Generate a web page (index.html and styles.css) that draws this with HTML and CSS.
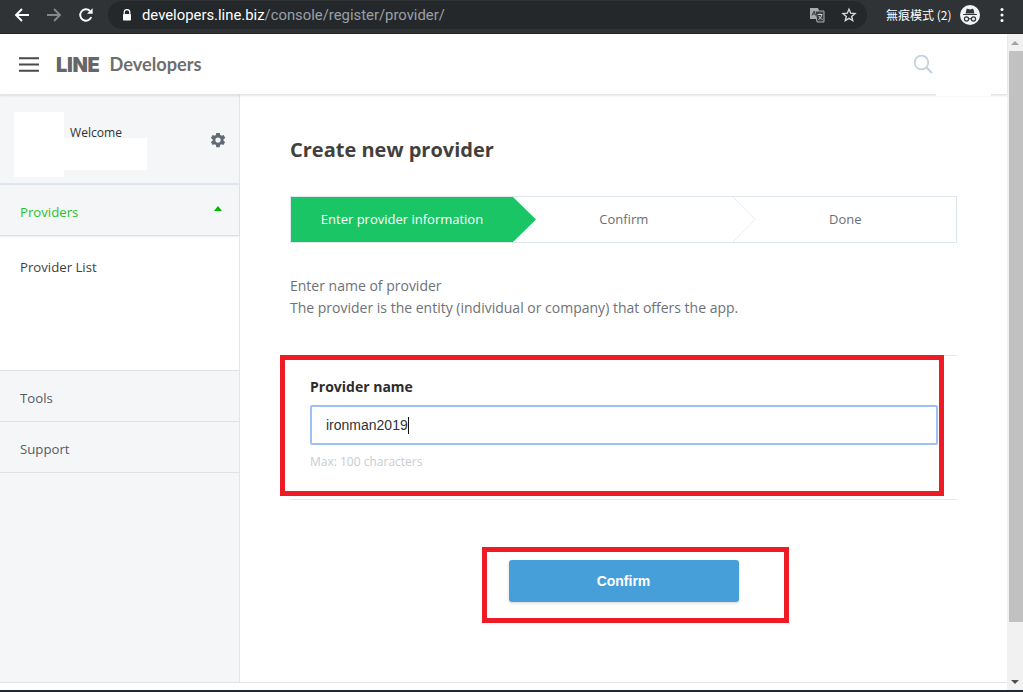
FILE: index.html
```html
<!DOCTYPE html>
<html lang="en">
<head>
<meta charset="utf-8">
<title>Create new provider</title>
<link rel="stylesheet" href="styles.css">
</head>
<body>
<div class="toolbar">
  <svg class="tb-icon back" viewBox="0 0 16 16"><path d="M15 8H2.5M8 2 2 8l6 6" fill="none" stroke="#fff" stroke-width="1.9"/></svg>
  <svg class="tb-icon forward" viewBox="0 0 16 16"><path d="M1 8h12.5M8 2l6 6-6 6" fill="none" stroke="#85888b" stroke-width="1.9"/></svg>
  <svg class="tb-icon reload" viewBox="0 0 16 16"><path d="M13.2 10.2A5.7 5.7 0 1 1 12 4" fill="none" stroke="#fff" stroke-width="1.9"/><path d="M14.6 1.2v5.6H9z" fill="#fff"/></svg>
  <div class="omnibox">
    <svg class="lock" viewBox="0 0 10 12"><path d="M2.2 5V3.4a2.8 2.8 0 0 1 5.6 0V5" fill="none" stroke="#fff" stroke-width="1.2"/><rect x="1" y="5" width="8" height="6.5" rx=".8" fill="#fff"/></svg>
    <span class="url"><span class="host">developers.line.biz</span>/console/register/provider/</span>
    <svg class="translate" viewBox="0 0 16 16"><path d="M1 1h8l1 2.5V12H1z" fill="#a9abad"/><path d="M6 4h9v11H8z" fill="#3a3d40" stroke="#a9abad"/><path d="M3 8.5 5 4l1.6 4.500M3.800 7h2.400" fill="none" stroke="#333" stroke-width=".9"/><path d="M8.500 7.500h5M11 6.500v1M9.500 12.500c2-1 3-3 3.200-5M10 9c.6 1.500 1.800 3 3.500 3.500" fill="none" stroke="#d4d5d6" stroke-width=".9"/></svg>
    <svg class="star" viewBox="0 0 16 16"><path d="m8 2.200 1.700 4 4.300.4-3.300 2.800 1 4.200L8 11.400l-3.700 2.200 1-4.200L2 6.600l4.300-.4z" fill="none" stroke="#d5d7da" stroke-width="1.400"/></svg>
  </div>
  <span class="incognito-label">無痕模式 (2)</span>
  <svg class="incognito" viewBox="0 0 20 20"><circle cx="10" cy="10" r="10" fill="#f1f3f4"/><path d="M3.200 9h13.600v1H3.200zM5.500 8.500 6.600 4.200c.1-.4.500-.5.900-.4L10 4.500l2.500-.7c.4-.1.800 0 .9.400l1.100 4.300z" fill="#323639"/><circle cx="6.500" cy="14" r="2.100" fill="none" stroke="#323639" stroke-width="1.200"/><circle cx="13.500" cy="14" r="2.100" fill="none" stroke="#323639" stroke-width="1.200"/><path d="M8.600 13.700h2.800" stroke="#323639" stroke-width="1"/></svg>
  <svg class="menu-dots" viewBox="0 0 4 16"><circle cx="2" cy="2.500" r="1.500" fill="#fff"/><circle cx="2" cy="8" r="1.500" fill="#fff"/><circle cx="2" cy="13.500" r="1.500" fill="#fff"/></svg>
</div>

<div class="window">
  <div class="viewport">
    <header class="app-header">
      <svg class="hamburger" viewBox="0 0 20 15"><path d="M0 1.200h20M0 7.500h20M0 13.800h20" stroke="#4a4a4a" stroke-width="2"/></svg>
      <span class="logo-line">LINE</span>
      <span class="logo-dev">Developers</span>
      <svg class="search" viewBox="0 0 20 20"><circle cx="8.500" cy="8.500" r="6.800" fill="none" stroke="#c3d0de" stroke-width="1.800"/><path d="m13.500 13.500 5.500 5.500" stroke="#c3d0de" stroke-width="2.200"/></svg>
    </header>
    <div class="columns">
      <aside class="sidebar">
        <div class="user">
          <span class="welcome">Welcome</span>
          <svg class="gear" viewBox="0 0 24 24"><path fill="#606b75" fill-rule="evenodd" d="M19.400 13a7.500 7.500 0 0 0 0-2l2.400-1.800-2.300-4-2.800 1.100a7.500 7.500 0 0 0-1.700-1L14.300 2.500H9.700l-.4 2.800a7.500 7.500 0 0 0-1.700 1L4.800 5.200l-2.300 4L4.900 11a7.500 7.500 0 0 0 0 2l-2.400 1.800 2.300 4 2.800-1.100a7.500 7.500 0 0 0 1.700 1l.4 2.800h4.600l.4-2.800a7.500 7.500 0 0 0 1.700-1l2.800 1.100 2.300-4zM12 15.500a3.500 3.500 0 1 1 0-7 3.500 3.500 0 0 1 0 7z"/></svg>
        </div>
        <div class="nav-open">
          <span>Providers</span>
          <span class="caret-up"></span>
        </div>
        <div class="subnav"><span>Provider List</span></div>
        <div class="nav-item">Tools</div>
        <div class="nav-item">Support</div>
      </aside>
      <main class="content">
        <h1 class="title">Create new provider</h1>
        <ol class="steps">
          <li class="step step-active">Enter provider information</li>
          <li class="step">Confirm</li>
          <li class="step step-last">
            <svg class="step-sep" viewBox="0 0 23 45"><path d="M0 0l22 22.500L0 45" fill="none" stroke="#e8ecf2"/></svg>
            Done
          </li>
        </ol>
        <p class="intro">Enter name of provider<br>The provider is the entity (individual or company) that offers the app.</p>
        <section class="field">
          <label class="field-label" for="pname">Provider name</label>
          <div class="input"><span id="pname">ironman2019</span><span class="text-caret"></span></div>
          <div class="hint">Max: 100 characters</div>
        </section>
        <div class="actions"><button class="confirm" type="button">Confirm</button></div>
      </main>
    </div>
    <div class="page-foot"></div>
    <span class="redact redact-a"></span>
    <span class="redact redact-b"></span>
    <span class="redact redact-c"></span>
    <span class="mark mark-form"></span>
    <span class="mark mark-button"></span>
  </div>
  <div class="scrollbar">
    <span class="arrow-up"></span>
    <span class="thumb"></span>
    <span class="arrow-down"></span>
  </div>
</div>
<div class="taskbar"></div>
</body>
</html>
```

FILE: styles.css
```css
* { box-sizing: border-box; }
html, body { margin: 0; padding: 0; height: 692px; overflow: hidden; background: #fff; }
body { display: flex; flex-direction: column; width: 1023px; font-family: "Open Sans", "Noto Sans", sans-serif; color: #4a4f55; }

.toolbar { height: 34px; flex: none; background: #303336; border-bottom: 1px solid #26282b; display: flex; align-items: center; padding: 0 0 4px 14px; position: relative; }
.tb-icon { width: 16px; height: 16px; flex: none; }
.forward { margin-left: 16px; }
.reload { margin-left: 16px; }
.omnibox { margin-left: 14px; width: 759px; height: 28px; background: #25282b; border-radius: 14px; display: flex; align-items: center; padding: 0 10px 0 14px; }
.lock { width: 10px; height: 12px; flex: none; }
.url { margin-left: 10px; font: 14.850px "Roboto", sans-serif; color: #9aa0a6; white-space: nowrap; flex: 1; }
.host { color: #fff; }
.translate { width: 16px; height: 16px; margin-right: 16px; }
.star { width: 16px; height: 16px; margin-right: 0; }
.incognito-label { margin-left: 19px; font: 12px "Noto Sans CJK TC", sans-serif; color: #fff; white-space: nowrap; }
.incognito { width: 20px; height: 20px; margin-left: 9px; flex: none; }
.menu-dots { width: 4px; height: 16px; margin-left: 20px; flex: none; }

.window { flex: 1; display: flex; min-height: 0; }
.viewport { flex: 1; min-width: 0; display: flex; flex-direction: column; position: relative; }

.app-header { height: 61px; flex: none; display: flex; align-items: center; padding-left: 19px; border-bottom: 1px solid #e4e4e4; box-shadow: 0 1px 2px rgba(0,0,0,.1); position: relative; z-index: 1; background: #fff; }
.hamburger { width: 20px; height: 15px; flex: none; }
.logo-line { margin: 1px 0 0 17px; font: 900 20px "Inter", sans-serif; color: #666; letter-spacing: -.3px; }
.logo-dev { margin-left: 10px; font: 700 18.200px "Lato", sans-serif; color: #6e6e6e; }
.search { width: 20px; height: 20px; margin-left: auto; margin-right: 74px; }

.columns { flex: 1; min-height: 0; display: flex; }
.sidebar { width: 240px; flex: none; background: #f5f6f8; border-right: 1px solid #e1e5ec; font-size: 13.200px; }
.user { height: 90px; border-bottom: 2px solid #e0e6ef; display: flex; justify-content: space-between; padding: 30px 13px 0 70px; }
.welcome { font-size: 12.100px; color: #333; line-height: 16px; }
.gear { width: 18px; height: 18px; margin: 6px -1px 0 0; }
.nav-open { height: 51px; display: flex; justify-content: space-between; align-items: center; padding: 4px 17px 0 20px; color: #2cc12c; border-bottom: 1px solid #dde0e4; box-shadow: 0 1px 2px rgba(0,0,0,.07); position: relative; }
.caret-up { width: 0; height: 0; border-left: 4.500px solid transparent; border-right: 4.500px solid transparent; border-bottom: 5px solid #00b900; margin-bottom: 7px; }
.subnav { height: 135px; background: #fff; padding: 23px 20px 0; font-size: 13.200px; line-height: 16px; color: #3c3f43; border-bottom: 1px solid #dfe3e8; }
.nav-item { height: 51px; display: flex; align-items: center; padding: 4px 20px 0; color: #555a60; border-bottom: 1px solid #dfe3e8; }

.content { flex: 1; min-width: 0; padding: 0 50px 0 50px; }
.title { margin: 41px 0 0; font-size: 20px; line-height: 28px; font-weight: 700; color: #43403c; }
.steps { list-style: none; margin: 32px 0 0; padding: 0; display: flex; height: 47px; border: 1px solid #e0e6ef; width: 667px; position: relative; }
.step { flex: 1; display: flex; align-items: center; justify-content: center; font-size: 13px; color: #6a6f75; position: relative; padding-bottom: 2px; }
.step-active { background: #19c564; color: #fff; margin: 0; flex: none; width: 222px; height: 45px; }
.step-active::after { content: ""; position: absolute; left: 100%; top: 0; width: 23px; height: 45px; background: #19c564; clip-path: polygon(0 0, 100% 50%, 0 100%); }
.step-sep { position: absolute; left: -2px; top: 0; width: 23px; height: 45px; }
.intro { margin: 32px 0 0; font-size: 14px; line-height: 22px; color: #6e7277; }
.field { margin-top: 36px; height: 145px; border-top: 1px solid #e4e7ef; border-bottom: 1px solid #e4e7ef; padding: 21px 19px 0 20px; width: 667px; }
.field-label { display: block; font-size: 14px; font-weight: 700; line-height: 20px; color: #2c2c2c; }
.input { margin-top: 8px; height: 40px; border: 2px solid #9fc0f6; border-radius: 2px; padding-left: 14px; display: flex; align-items: center; font: 14px "Liberation Sans", sans-serif; color: #333; }
.text-caret { width: 1px; height: 17px; background: #111; }
.hint { margin-top: 9px; font-size: 12px; line-height: 16px; color: #c8ccd2; }
.actions { display: flex; justify-content: center; margin-top: 60px; width: 667px; }
.confirm { width: 230px; height: 42px; border: 0; border-radius: 3px; background: #479fd9; color: #fff; font: 700 14px "Liberation Sans", sans-serif; box-shadow: 0 1px 3px rgba(0,0,0,.18); }

.page-foot { height: 8px; flex: none; border-top: 1px solid #dfe5ea; background: #fff; }

.redact { position: absolute; background: #fff; z-index: 2; }
.redact-a { left: 14px; top: 78px; width: 50px; height: 65px; }
.redact-b { left: 64px; top: 104px; width: 83px; height: 32px; }
.redact-c { left: 936px; top: 56px; width: 55px; height: 6px; }
.mark { position: absolute; border: 5px solid #ed1c24; z-index: 3; }
.mark-form { left: 280px; top: 321px; width: 664px; height: 141px; }
.mark-button { left: 482px; top: 513px; width: 307px; height: 76px; }

.scrollbar { width: 16px; flex: none; background: #f1f1f1; position: relative; display: flex; flex-direction: column; align-items: flex-end; }
.thumb { position: absolute; left: 2px; right: 0; top: 17px; height: 571px; background: #c1c1c1; }
.arrow-up { position: absolute; left: 4px; top: 7px; width: 0; height: 0; border-left: 4px solid transparent; border-right: 4px solid transparent; border-bottom: 4px solid #a3a3a3; }
.arrow-down { position: absolute; left: 4px; bottom: 6px; width: 0; height: 0; border-left: 4px solid transparent; border-right: 4px solid transparent; border-top: 4px solid #505050; }

.taskbar { height: 2px; flex: none; background: #1c2a33; }
```
